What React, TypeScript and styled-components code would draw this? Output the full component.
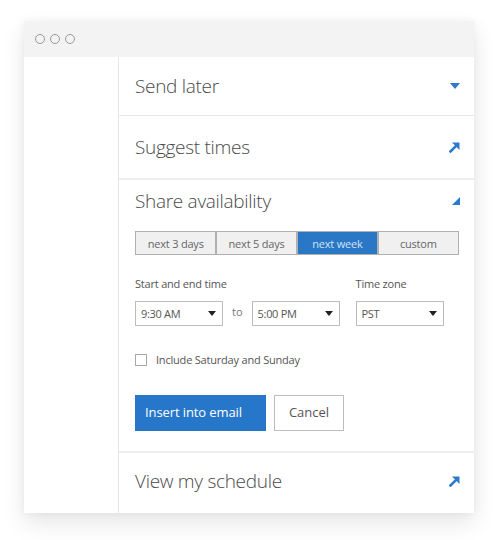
import React from "react";
import styled, { createGlobalStyle } from "styled-components";

const Global = createGlobalStyle`
  html, body { margin: 0; padding: 0; background: #fff; }
  body { font-family: "Open Sans", "Noto Sans", sans-serif; color: #444; }
  * { box-sizing: border-box; }
`;

const Page = styled.div`
  width: 498px;
  height: 540px;
  padding: 21px 0 0 24px;
`;

const Win = styled.div`
  width: 450px;
  height: 492px;
  background: #fff;
  box-shadow: 0 10px 22px rgba(0, 0, 0, 0.1), 0 0 8px rgba(0, 0, 0, 0.05);
  display: flex;
  flex-direction: column;
`;

const TitleBar = styled.div`
  height: 36px;
  background: #f3f3f3;
  display: flex;
  align-items: center;
  gap: 5px;
  padding-left: 11px;
`;

const Dot = styled.span`
  width: 10px;
  height: 10px;
  border-radius: 50%;
  border: 1.3px solid #9a9a9a;
`;

const Body = styled.div`
  flex: 1;
  display: flex;
`;

const Sidebar = styled.div`
  width: 95px;
  border-right: 1px solid #e6e6e6;
`;

const Content = styled.div`
  flex: 1;
  display: flex;
  flex-direction: column;
`;

const Header = styled.div<{ $h: number; $pt?: number; $pb?: number }>`
  height: ${(p) => p.$h}px;
  padding: ${(p) => p.$pt ?? 0}px 14px ${(p) => p.$pb ?? 0}px 16px;
  display: flex;
  align-items: center;
  justify-content: space-between;
`;

const HeaderText = styled.span`
  font-size: 19px;
  font-weight: 300;
  letter-spacing: -0.3px;
  color: #4a4a4a;
  line-height: 24px;
`;

const Divider = styled.div<{ $w: number; $c: string }>`
  height: ${(p) => p.$w}px;
  background: ${(p) => p.$c};
`;

const Panel = styled.div`
  padding: 0 0 0 16px;
  display: flex;
  flex-direction: column;
`;

const Segments = styled.div`
  display: flex;
  width: 324px;
  height: 24px;
  margin-top: 6px;
  border: 1.5px solid #b0b0b0;
  background: #b0b0b0;
  gap: 1.5px;
`;

const Segment = styled.div<{ $active?: boolean }>`
  flex: 1;
  display: flex;
  align-items: center;
  justify-content: center;
  font-size: 11px;
  letter-spacing: -0.2px;
  color: ${(p) => (p.$active ? "#cfe2f7" : "#666")};
  background: ${(p) => (p.$active ? "#2a77c6" : "#f0f0f0")};
`;

const FieldRow = styled.div`
  display: flex;
  gap: 16px;
  margin-top: 22px;
`;

const Field = styled.div`
  display: flex;
  flex-direction: column;
  gap: 10px;
`;

const Label = styled.div`
  font-size: 11px;
  color: #555;
  letter-spacing: -0.2px;
  line-height: 14px;
`;

const Controls = styled.div`
  display: flex;
  align-items: center;
`;

const Select = styled.div<{ $w: number }>`
  width: ${(p) => p.$w}px;
  height: 25px;
  border: 1.5px solid #bdbdbd;
  display: flex;
  align-items: center;
  justify-content: space-between;
  padding: 0 6px 0 5px;
  font-size: 11px;
  letter-spacing: -0.3px;
  color: #555;
`;

const To = styled.span`
  font-size: 11px;
  color: #777;
  margin: -4px 9px 0 9px;
`;

const CheckRow = styled.label`
  display: flex;
  align-items: center;
  gap: 9px;
  margin-top: 26px;
  font-size: 11px;
  color: #555;
  letter-spacing: -0.2px;
`;

const Box = styled.span`
  width: 12px;
  height: 12px;
  border: 1px solid #a8a8a8;
  background: #fff;
`;

const Buttons = styled.div`
  display: flex;
  gap: 8px;
  margin-top: 28px;
`;

const Primary = styled.button`
  width: 131px;
  height: 36px;
  border: none;
  background: #2677c9;
  color: #fff;
  font-family: inherit;
  font-size: 13px;
  letter-spacing: -0.1px;
  text-align: left;
  padding: 0 0 2px 10px;
`;

const Secondary = styled.button`
  width: 70px;
  height: 36px;
  border: 1.5px solid #bdbdbd;
  background: #fff;
  color: #555;
  font-family: inherit;
  font-size: 13px;
  padding: 0 0 2px 0;
`;

const Spacer = styled.div`
  flex: 1;
`;

const Blue = "#2a7ad0";

const DownIcon = () => (
  <svg width="10" height="6" viewBox="0 0 10 6">
    <path d="M0 0 H10 L5 6 Z" fill={Blue} />
  </svg>
);

const ArrowIcon = () => (
  <svg width="11" height="11" viewBox="0 0 11 11">
    <path d="M1.5 9.5 L7 4" stroke={Blue} strokeWidth="2.6" strokeLinecap="square" />
    <path d="M3 0.5 H10.5 V8 Z" fill={Blue} />
  </svg>
);

const CornerIcon = () => (
  <svg width="8" height="8" viewBox="0 0 8 8">
    <path d="M8 0 V8 H0 Z" fill={Blue} />
  </svg>
);

const Caret = () => (
  <svg width="8" height="5" viewBox="0 0 8 5">
    <path d="M0 0 H8 L4 5 Z" fill="#222" />
  </svg>
);

export default function App() {
  return (
    <Page>
      <Global />
      <Win>
        <TitleBar>
          <Dot />
          <Dot />
          <Dot />
        </TitleBar>
        <Body>
          <Sidebar />
          <Content>
            <Header $h={58} $pb={1}>
              <HeaderText>Send later</HeaderText>
              <DownIcon />
            </Header>
            <Divider $w={1} $c="#e6e6e6" />
            <Header $h={62}>
              <HeaderText>Suggest times</HeaderText>
              <ArrowIcon />
            </Header>
            <Divider $w={2} $c="#eeeeee" />
            <Header $h={45} $pt={9} $pb={12}>
              <HeaderText>Share availability</HeaderText>
              <CornerIcon />
            </Header>
            <Panel>
              <Segments>
                <Segment>next 3 days</Segment>
                <Segment>next 5 days</Segment>
                <Segment $active>next week</Segment>
                <Segment>custom</Segment>
              </Segments>
              <FieldRow>
                <Field>
                  <Label>Start and end time</Label>
                  <Controls>
                    <Select $w={88}>
                      9:30 AM <Caret />
                    </Select>
                    <To>to</To>
                    <Select $w={88}>
                      5:00 PM <Caret />
                    </Select>
                  </Controls>
                </Field>
                <Field>
                  <Label>Time zone</Label>
                  <Select $w={88}>
                    PST <Caret />
                  </Select>
                </Field>
              </FieldRow>
              <CheckRow>
                <Box />
                Include Saturday and Sunday
              </CheckRow>
              <Buttons>
                <Primary>Insert into email</Primary>
                <Secondary>Cancel</Secondary>
              </Buttons>
            </Panel>
            <Spacer />
            <Divider $w={2} $c="#eeeeee" />
            <Header $h={60} $pb={4}>
              <HeaderText>View my schedule</HeaderText>
              <ArrowIcon />
            </Header>
          </Content>
        </Body>
      </Win>
    </Page>
  );
}
